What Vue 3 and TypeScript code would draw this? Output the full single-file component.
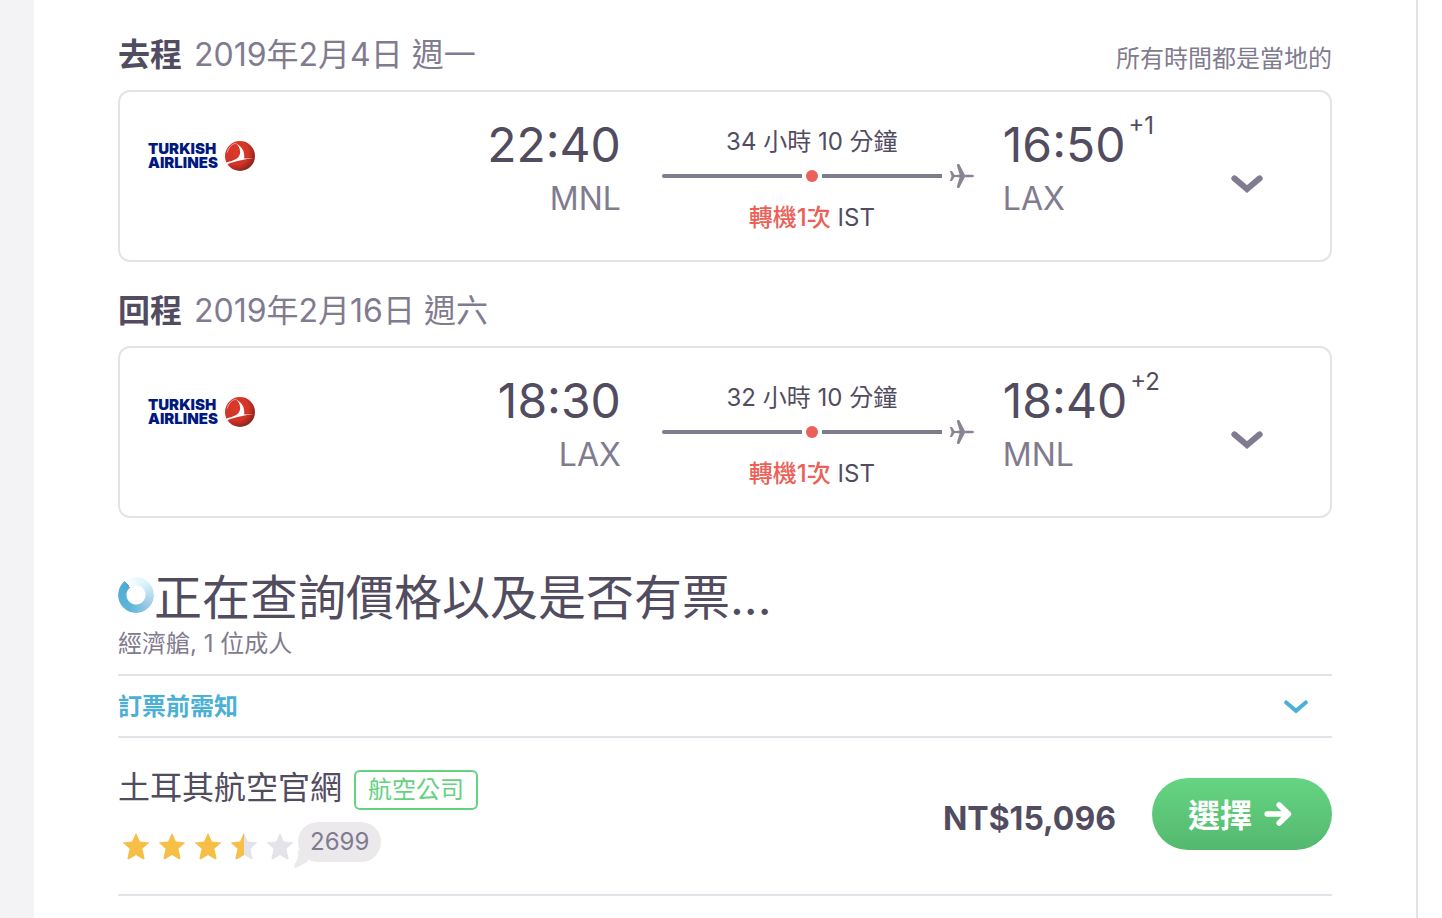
<script setup lang="ts">
import { ref } from 'vue'

interface Leg {
  label: string
  date: string
  departTime: string
  departAirport: string
  duration: string
  stops: string
  via: string
  arriveTime: string
  dayOffset: string
  arriveAirport: string
}

const legs: Leg[] = [
  {
    label: '去程',
    date: '2019年2月4日 週一',
    departTime: '22:40',
    departAirport: 'MNL',
    duration: '34 小時 10 分鐘',
    stops: '轉機1次',
    via: 'IST',
    arriveTime: '16:50',
    dayOffset: '+1',
    arriveAirport: 'LAX',
  },
  {
    label: '回程',
    date: '2019年2月16日 週六',
    departTime: '18:30',
    departAirport: 'LAX',
    duration: '32 小時 10 分鐘',
    stops: '轉機1次',
    via: 'IST',
    arriveTime: '18:40',
    dayOffset: '+2',
    arriveAirport: 'MNL',
  },
]

const stars: string[] = ['full', 'full', 'full', 'half', 'empty']
const starPath =
  'M14 .8 17.9 9.4 27.4 10.4 20.4 16.8 22.5 26 Q22.6 27.6 21 27.2 L14 23 7 27.2 Q5.4 27.6 5.5 26 L7.6 16.8 .6 10.4 10.1 9.4Z'

const opened = ref<boolean[]>([false, false])
const noticeOpen = ref(false)
</script>

<template>
  <div class="page">
    <main class="panel">
      <section v-for="(leg, i) in legs" :key="leg.label" class="leg">
        <header class="leg-head">
          <h2 class="leg-title">
            <strong>{{ leg.label }}</strong>
            <span>{{ leg.date }}</span>
          </h2>
          <span v-if="i === 0" class="note">所有時間都是當地的</span>
        </header>
        <div class="leg-card">
          <div class="carrier-depart">
            <div class="logo" role="img" aria-label="Turkish Airlines">
              <span class="logo-text">
                <span>TURKISH</span>
                <span>AIRLINES</span>
              </span>
              <svg width="30" height="30" viewBox="0 0 30 30">
                <defs>
                  <radialGradient :id="'globe' + i" cx="38%" cy="38%" r="64%">
                    <stop offset="0" stop-color="#dc3a2c" />
                    <stop offset="0.65" stop-color="#d23427" />
                    <stop offset="1" stop-color="#8e241d" />
                  </radialGradient>
                </defs>
                <circle cx="15" cy="15" r="15" :fill="`url(#globe${i})`" />
                <path d="M2.2 11.5Q4.2 4 10.5 2.2" fill="none" stroke="#eda398" stroke-width="1" />
                <path
                  d="M10 2C16 4.6 20.2 9.8 19.2 17.4L28.6 17C20 18.2 9.5 20.2 2.4 23.2 1.8 22.8 1.6 22 1.3 21.4 8.6 20 15.4 17.4 15.2 10.8 15 6.8 13 3.8 10 2Z"
                  fill="#fff"
                />
              </svg>
            </div>
            <div class="point depart">
              <div class="time">{{ leg.departTime }}</div>
              <div class="airport">{{ leg.departAirport }}</div>
            </div>
          </div>
          <div class="route">
            <div class="duration">{{ leg.duration }}</div>
            <div class="track">
              <span class="line first"></span>
              <span class="dot"></span>
              <span class="line last"></span>
              <svg class="plane" width="24" height="24" viewBox="0 0 24 24">
                <path
                  d="M6.8 1Q7 0 8 0H9.2L14.8 10.8H22.4Q24 11 24 12T22.4 13.2H14.8L9.2 24H8Q7 24 6.8 23L9.6 13.2 4.6 12.9 2 17H.4Q0 16.8 0 16.4L1.6 12 0 7.6Q0 7.2.4 7H2L4.6 11.1 9.6 10.8Z"
                  fill="#8b8296"
                />
              </svg>
            </div>
            <div class="stops">
              <span class="stop-count">{{ leg.stops }}</span> {{ leg.via }}
            </div>
          </div>
          <div class="point">
            <div class="time">{{ leg.arriveTime }}<span class="offset">{{ leg.dayOffset }}</span></div>
            <div class="airport">{{ leg.arriveAirport }}</div>
          </div>
          <button
            class="toggle"
            type="button"
            :aria-label="leg.label"
            :aria-expanded="opened[i]"
            @click="opened[i] = !opened[i]"
          >
            <svg width="32" height="18" viewBox="0 0 32 18">
              <path d="M3.4 3.4 16 14 28.6 3.4" fill="none" stroke="#817b8f" stroke-width="6" stroke-linecap="round" />
            </svg>
          </button>
        </div>
      </section>

      <section class="status">
        <h1 class="status-title">
          <span class="spinner"></span>
          <span>正在查詢價格以及是否有票...</span>
        </h1>
        <p class="status-sub">經濟艙, 1 位成人</p>
      </section>

      <button class="notice" type="button" :aria-expanded="noticeOpen" @click="noticeOpen = !noticeOpen">
        <span>訂票前需知</span>
        <svg width="24" height="14" viewBox="0 0 24 14">
          <path d="M2.2 2.4 12 10.8 21.8 2.4" fill="none" stroke="#4bb0d6" stroke-width="4" stroke-linecap="round" />
        </svg>
      </button>

      <section class="offer">
        <div class="seller">
          <div class="seller-name">
            <span>土耳其航空官網</span>
            <span class="badge">航空公司</span>
          </div>
          <div class="rating">
            <div class="stars" role="img" aria-label="3.5 / 5">
              <svg v-for="(s, n) in stars" :key="n" width="28" height="28" viewBox="0 0 28 28">
                <path :d="starPath" :fill="s === 'full' ? '#f8bf46' : '#e5e3ea'" />
                <path v-if="s === 'half'" :d="starPath" fill="#f8bf46" class="half" />
              </svg>
            </div>
            <span class="reviews">
              <svg class="tail" width="18" height="18" viewBox="0 0 18 18">
                <path d="M4 0V8L.3 15.5Q-.2 18 2.4 17.8L13 12 18 4Z" fill="#ebe9ec" />
              </svg>
              <span class="reviews-count">2699</span>
            </span>
          </div>
        </div>
        <div class="buy">
          <span class="price">NT$15,096</span>
          <button class="select" type="button">
            <span class="select-label">選擇</span>
            <svg width="28" height="26" viewBox="0 0 28 26">
              <path
                d="M3.2 13H23M15.2 4 24.4 13 15.2 22"
                fill="none"
                stroke="#fff"
                stroke-width="5.6"
                stroke-linecap="round"
                stroke-linejoin="round"
              />
            </svg>
          </button>
        </div>
      </section>
    </main>
  </div>
</template>

<style>
body {
  margin: 0;
  background: #fff;
}
</style>

<style scoped>
.page {
  box-sizing: border-box;
  min-height: 100vh;
  display: flex;
  padding-right: 24px;
  border-left: 34px solid #f3f3f5;
  background: #fff;
  color: #524c61;
  font-family: Inter, "Noto Sans CJK TC", sans-serif;
  font-size: 24px;
}
.panel {
  flex: 1;
  min-width: 0;
  padding: 32px 84px 0;
  border-right: 2px solid #e5e3ea;
}
button {
  font: inherit;
  border: 0;
  padding: 0;
  background: none;
  cursor: pointer;
}
svg {
  display: block;
  flex: none;
}
.leg {
  margin-bottom: 26px;
}
.leg-head {
  display: flex;
  justify-content: space-between;
  align-items: flex-end;
  margin-bottom: 12px;
}
.leg-title {
  display: flex;
  gap: 12px;
  margin: 0;
  font-size: 32px;
  font-weight: 400;
  line-height: 46px;
  color: #817b8f;
}
.leg-title strong {
  font-weight: 700;
  color: #524c61;
}
.note {
  line-height: 38px;
  color: #817b8f;
}
.leg-card {
  display: grid;
  grid-template-columns: 5fr 382px 2fr 110px;
  padding: 24px 28px 26px;
  border: 2px solid #e5e3ea;
  border-radius: 12px;
}
.carrier-depart {
  display: flex;
  justify-content: space-between;
}
.logo {
  display: flex;
  gap: 7px;
  height: 30px;
  margin-top: 25px;
  align-items: center;
}
.logo-text {
  display: grid;
  color: #00197f;
  font-size: 15px;
  font-weight: 900;
  line-height: 14px;
}
.depart {
  text-align: right;
}
.time {
  font-size: 48px;
  line-height: 58px;
  white-space: nowrap;
}
.offset {
  display: inline-block;
  margin-left: 3px;
  font-size: 24px;
  line-height: 20px;
  vertical-align: top;
}
.airport {
  font-size: 32px;
  line-height: 50px;
  color: #817b8f;
}
.route {
  width: 300px;
  padding: 10px 0 0 41px;
  text-align: center;
  line-height: 32px;
}
.track {
  display: flex;
  align-items: center;
  margin: 6px -12px 14px 0;
}
.line {
  height: 4px;
  background: #817b8f;
}
.first {
  flex: 7;
  border-radius: 2px 0 0 2px;
}
.last {
  flex: 6;
}
.dot {
  width: 12px;
  height: 12px;
  margin: 0 4px;
  border-radius: 50%;
  background: #eb6157;
}
.plane {
  margin-left: 8px;
}
.stop-count {
  color: #eb6157;
  font-weight: 500;
}
.toggle {
  display: flex;
  align-items: center;
  justify-content: center;
  height: 36px;
  margin-top: 50px;
}
.status {
  margin-top: 50px;
  padding-bottom: 14px;
  border-bottom: 2px solid #e5e3ea;
}
.status-title {
  display: flex;
  align-items: center;
  margin: 0;
  font-size: 48px;
  font-weight: 400;
  line-height: 60px;
}
.spinner {
  width: 36px;
  height: 36px;
  margin-bottom: 6px;
  border-radius: 50%;
  background: conic-gradient(from -38deg, #fff, #d8f1fa 80deg, #9fcde8 160deg, #62b5d8 240deg, #4bacd2 360deg);
  mask: radial-gradient(circle, transparent 9px, #000 10px);
}
.status-sub {
  margin: 0;
  line-height: 32px;
  color: #817b8f;
}
.notice {
  display: flex;
  justify-content: space-between;
  align-items: center;
  width: 100%;
  padding: 2px 24px 0 0;
  border-bottom: 2px solid #e5e3ea;
  color: #4bb0d6;
  font-weight: 700;
  line-height: 58px;
}
.offer {
  display: flex;
  justify-content: space-between;
  padding: 32px 0;
  border-bottom: 2px solid #e5e3ea;
}
.seller-name {
  display: flex;
  gap: 12px;
  font-size: 32px;
  line-height: 36px;
}
.badge {
  padding: 0 12px;
  border: 2px solid #65d282;
  border-radius: 6px;
  color: #65d282;
  font-size: 24px;
}
.rating {
  display: flex;
  align-items: center;
  margin-top: 12px;
}
.stars {
  display: flex;
  gap: 8px;
  padding: 8px 4px 0;
}
.half {
  clip-path: inset(0 50% 0 0);
}
.reviews {
  position: relative;
  padding: 0 12px;
  border-radius: 20px;
  background: #ebe9ec;
  color: #817b8f;
  line-height: 40px;
}
.reviews-count {
  position: relative;
}
.tail {
  position: absolute;
  left: -4px;
  bottom: -6px;
}
.buy {
  display: flex;
  align-items: center;
  gap: 36px;
  height: 72px;
  padding-top: 8px;
}
.price {
  padding-top: 8px;
  font-size: 32px;
  font-weight: 700;
}
.select {
  display: flex;
  align-items: center;
  gap: 12px;
  height: 72px;
  padding: 0 40px 0 36px;
  border-radius: 36px;
  background: linear-gradient(#65d582, #54b86f);
  color: #fff;
  font-size: 32px;
  font-weight: 700;
}
.select-label {
  padding-bottom: 2px;
}
</style>
